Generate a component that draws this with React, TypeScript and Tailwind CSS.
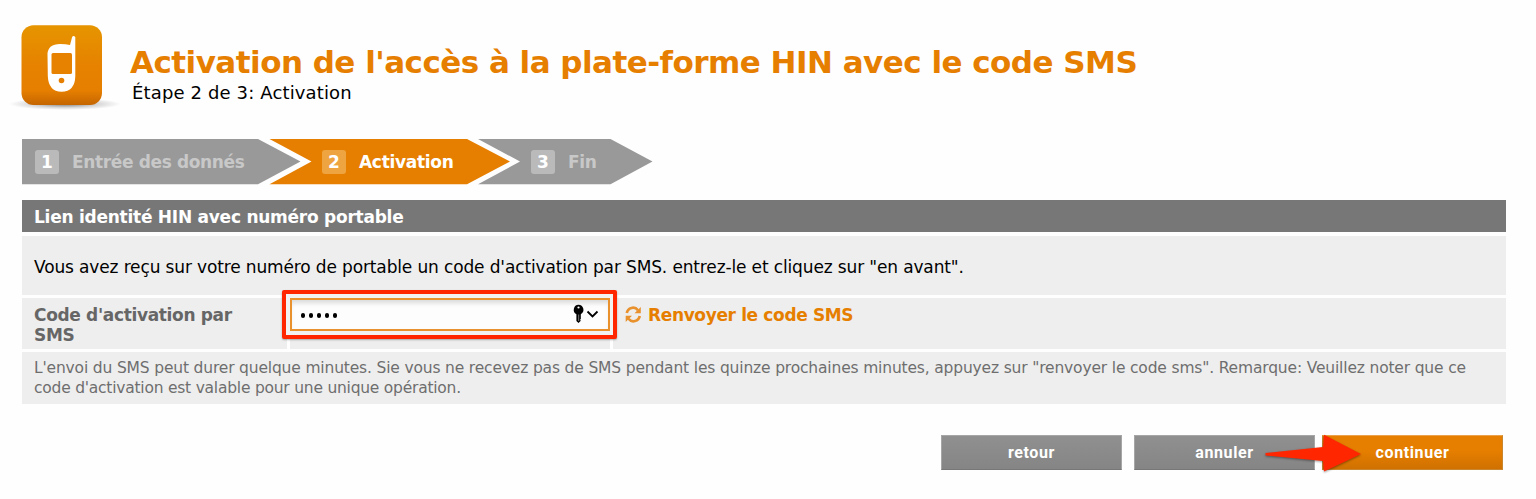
import React from 'react';

const verdana = "font-['Verdana','DejaVu_Sans',sans-serif]";

const PhoneIcon: React.FC = () => (
  <svg width="114" height="94" viewBox="0 0 114 94" className="block shrink-0">
    <defs>
      <linearGradient id="tile" x1="0" y1="0" x2="0" y2="1">
        <stop offset="0" stopColor="#e69500" />
        <stop offset="0.5" stopColor="#e68200" />
        <stop offset="0.82" stopColor="#e67f00" />
        <stop offset="1" stopColor="#c46500" />
      </linearGradient>
      <radialGradient id="shadow">
        <stop offset="0" stopColor="#000" stopOpacity="0.5" />
        <stop offset="0.6" stopColor="#000" stopOpacity="0.15" />
        <stop offset="1" stopColor="#000" stopOpacity="0" />
      </radialGradient>
    </defs>
    <ellipse cx="57" cy="79" rx="56" ry="6" fill="url(#shadow)" />
    <rect x="13.5" y="0.3" width="80.5" height="79.7" rx="12" fill="url(#tile)" />
    <path
      d="M62 20 L64 12.500 Q65 9.800 67.300 12 L67.300 51 Q67 66.500 53.500 66.800 Q40.500 66.500 39.800 51 L39.500 29 Q40 19 52 19 Q58 19 62 20 Z"
      fill="#fff"
    />
    <rect x="43.500" y="28" width="20.500" height="21" rx="1.500" fill="#e68200" />
    <circle cx="53.500" cy="55.500" r="2.800" fill="#e67f00" />
  </svg>
);

interface StepProps {
  number: number;
  label: string;
  active?: boolean;
  className: string;
  labelClass: string;
}

const Step: React.FC<StepProps> = ({ number, label, active = false, className, labelClass }) => (
  <li className={`flex h-full items-center ${className}`}>
    <span
      className={`flex h-6 w-6 shrink-0 items-center justify-center rounded-[3px] pt-px text-[17px] font-bold text-white ${
        active ? 'bg-[#eea440]' : 'bg-[#bababa]'
      }`}
    >
      {number}
    </span>
    <span className={`ml-[13px] whitespace-nowrap pt-[2px] text-[17px] font-bold ${active ? 'text-white' : 'text-[#c8c8c8]'} ${labelClass}`}>
      {label}
    </span>
  </li>
);

const Steps: React.FC = () => (
  <div className="relative ml-[22px] mt-[20px] h-[46px] w-[632px]">
    <svg width="632" height="46" viewBox="0 0 632 46" className="absolute inset-0">
      <path d="M0 0H236L278.500 22.500 236 45.200H0Z" fill="#999" />
      <path d="M247.500 0H445L488 22.500 445 45.200H247.500L289.500 22.500Z" fill="#e67f00" />
      <path d="M456 0H588.500L630.500 22.500 588.500 45.200H456L498 22.500Z" fill="#999" />
    </svg>
    <ol className="relative flex h-full">
      <Step number={1} label="Entrée des donnés" className="w-[286px] pl-[13px]" labelClass="tracking-[-0.36px]" />
      <Step number={2} label="Activation" active className="w-[209px] pl-[14px]" labelClass="tracking-[-0.3px]" />
      <Step number={3} label="Fin" className="pl-[14px]" labelClass="tracking-[-0.3px]" />
    </ol>
  </div>
);

const KeyIcon: React.FC = () => (
  <svg width="27" height="20" viewBox="0 0 27 20" className="block">
    <path d="M6.500.8a5 5 0 0 1 2.300 9.400V15l-.8.800.8.900-2.300 2.300-2.100-2V10.200A5 5 0 0 1 6.500.8Z" fill="#000" />
    <circle cx="6.500" cy="3.500" r="1.100" fill="#fff" />
    <path d="M6.700 10.500v6.500" stroke="#999" strokeWidth="0.800" />
    <path d="M15.500 7.500l5 5 5-5" fill="none" stroke="#000" strokeWidth="1.800" />
  </svg>
);

const RefreshIcon: React.FC = () => (
  <svg width="17" height="17" viewBox="0 0 17 17" className="-mt-px block shrink-0" fill="none" stroke="#e8912d">
    <path d="M1.800 7A6.300 6.300 0 0 1 13 4.200M14.700 10A6.300 6.300 0 0 1 3.500 12.800" strokeWidth="2.700" />
    <path d="M15.800 1v6.300H9.500Z M.7 16V9.700H7Z" fill="#e8912d" stroke="none" />
  </svg>
);

const CodeField: React.FC = () => (
  <div className="absolute -left-[8px] -top-[8px] h-[49px] w-[335px] rounded-[2px] border-4 border-[#ff2600] bg-[#f2f2f2] p-[3.500px] shadow-[0_1px_2px_rgba(0,0,0,0.3)]">
    <div className="flex h-[33px] w-[320px] items-center justify-between border-2 border-[#e8912d] bg-[#fdfdfd] pl-[9px] pr-[9px] shadow-[inset_0_5px_5px_-2px_rgba(0,0,0,0.14)]">
      <span className="flex gap-[3.500px] pt-[3px]">
        {[0, 1, 2, 3, 4].map((dot) => (
          <i key={dot} className="h-[4.500px] w-[4.500px] rounded-full bg-black" />
        ))}
      </span>
      <KeyIcon />
    </div>
  </div>
);

interface ButtonProps {
  label: string;
  primary?: boolean;
  className?: string;
}

const Button: React.FC<ButtonProps> = ({ label, primary = false, className = '' }) => (
  <button
    className={`h-[35px] w-[181px] border pt-px font-['Roboto',sans-serif] text-[16px] font-bold tracking-[0.600px] text-white ${
      primary
        ? 'border-[#c9862f] border-t-[#eba04a] bg-linear-to-b from-[#e67f00] from-45% to-[#cf7000]'
        : 'border-[#a6a6a6] border-b-[#777] bg-linear-to-b from-[#909090] to-[#858585]'
    } ${className}`}
  >
    {label}
  </button>
);

const App: React.FC = () => (
  <main className={`h-[499px] w-[1536px] overflow-hidden bg-[#fefefe] text-black ${verdana}`}>
    <header className="flex h-[119px] items-start pl-[8px] pt-[25px]">
      <PhoneIcon />
      <div className="ml-[8px] pt-[17px]">
        <h1 className="whitespace-nowrap text-[31px] font-bold leading-[40px] tracking-[-0.53px] text-[#e67f00]">
          Activation de l'accès à la plate-forme HIN avec le code SMS
        </h1>
        <p className="ml-[2px] text-[18px] leading-[21px] tracking-[0.14px]">Étape 2 de 3: Activation</p>
      </div>
    </header>

    <Steps />

    <section className="ml-[22px] mt-[15px] w-[1484px]">
      <h2 className="h-[32px] bg-[#777] pl-[12px] text-[17px] font-bold leading-[34px] tracking-[-0.25px] text-white">
        Lien identité HIN avec numéro portable
      </h2>
      <p className="mt-[4px] h-[59px] bg-[#eee] pl-[12px] text-[17px] leading-[62px] tracking-[-0.138px]">
        Vous avez reçu sur votre numéro de portable un code d'activation par SMS. entrez-le et cliquez sur "en avant".
      </p>
      <div className="mt-[3px] flex h-[51px] gap-[3px]">
        <label className="w-[265px] bg-[#eee] pl-[12px] pt-[7px] text-[17px] font-bold leading-5 tracking-[-0.34px] text-[#666]">
          Code d'activation par
          <br />
          SMS
        </label>
        <div className="relative w-[320px] bg-[#eee]">
          <CodeField />
        </div>
        <div className="flex flex-1 items-start bg-[#eee] pl-[12px] pt-[7px]">
          <a className="flex items-center gap-[6px] text-[17px] font-bold leading-5 tracking-[-0.36px] text-[#e67f00]">
            <RefreshIcon />
            <span className="whitespace-nowrap">Renvoyer le code SMS</span>
          </a>
        </div>
      </div>
      <p className="mt-[3px] h-[52px] whitespace-nowrap bg-[#eee] pl-[12px] pt-[7px] text-[15.500px] leading-[19.500px] tracking-[-0.167px] text-[#6e6e6e]">
        L'envoi du SMS peut durer quelque minutes. Sie vous ne recevez pas de SMS pendant les quinze prochaines minutes, appuyez sur "renvoyer le code sms". Remarque: Veuillez noter que ce
        <br />
        <span className="tracking-[-0.23px]">code d'activation est valable pour une unique opération.</span>
      </p>
    </section>

    <footer className="relative ml-[941px] mt-[31px] flex w-[562px]">
      <Button label="retour" />
      <Button label="annuler" className="ml-[12px]" />
      <Button label="continuer" primary className="ml-auto" />
      <svg width="100" height="42" viewBox="0 0 100 42" className="absolute left-[322px] -top-px drop-shadow-[0_1px_1px_rgba(0,0,0,0.4)]">
        <path d="M2.500 19 60 13 61 .8 98 20 61 37.500 60 27 2.500 21.500Z" fill="#ff2600" />
      </svg>
    </footer>
  </main>
);

export default App;
